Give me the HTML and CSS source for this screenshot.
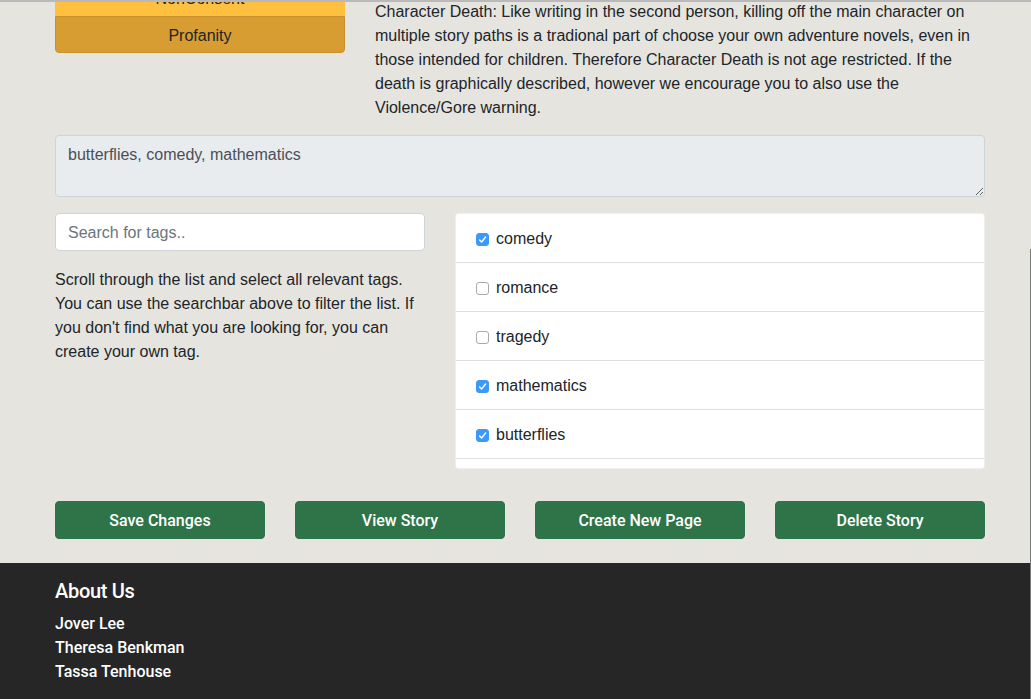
FILE: index.html
```html
<!DOCTYPE html>
<html lang="en">
<head>
<meta charset="utf-8">
<title>Edit Story</title>
<link rel="stylesheet" href="styles.css">
</head>
<body>
<div class="frame-top"></div>
<div class="scroll-edge"></div>
<main class="page">
  <section class="warn-row">
    <div class="warn-tags">
      <div class="warn-tag tag-nonconsent">NonConsent</div>
      <div class="warn-tag tag-profanity">Profanity</div>
    </div>
    <p class="warn-desc">Character Death: Like writing in the second person, killing off the main character on multiple story paths is a tradional part of choose your own adventure novels, even in those intended for children. Therefore Character Death is not age restricted. If the death is graphically described, however we encourage you to also use the Violence/Gore warning.</p>
  </section>

  <textarea class="tag-field" readonly>butterflies, comedy, mathematics</textarea>

  <section class="tag-row">
    <div class="tag-help">
      <input class="tag-search" type="text" placeholder="Search for tags..">
      <p class="help-text">Scroll through the list and select all relevant tags. You can use the searchbar above to filter the list. If you don't find what you are looking for, you can create your own tag.</p>
    </div>
    <ul class="tag-list">
      <li class="tag-item"><span class="check on"><svg viewBox="0 0 13 13" width="13" height="13"><path d="M3.6 6.9 L5.6 9 L9.6 4" fill="none" stroke="#fff" stroke-width="1.4" stroke-linecap="round" stroke-linejoin="round"/></svg></span>comedy</li>
      <li class="tag-item"><span class="check"></span>romance</li>
      <li class="tag-item"><span class="check"></span>tragedy</li>
      <li class="tag-item"><span class="check on"><svg viewBox="0 0 13 13" width="13" height="13"><path d="M3.6 6.9 L5.6 9 L9.6 4" fill="none" stroke="#fff" stroke-width="1.4" stroke-linecap="round" stroke-linejoin="round"/></svg></span>mathematics</li>
      <li class="tag-item"><span class="check on"><svg viewBox="0 0 13 13" width="13" height="13"><path d="M3.6 6.9 L5.6 9 L9.6 4" fill="none" stroke="#fff" stroke-width="1.4" stroke-linecap="round" stroke-linejoin="round"/></svg></span>butterflies</li>
      <li class="tag-item"><span class="check"></span>horror</li>
    </ul>
  </section>

  <section class="actions">
    <button class="btn">Save Changes</button>
    <button class="btn">View Story</button>
    <button class="btn">Create New Page</button>
    <button class="btn">Delete Story</button>
  </section>
</main>
<footer class="footer">
  <h5 class="footer-title">About Us</h5>
  <div class="footer-name">Jover Lee</div>
  <div class="footer-name">Theresa Benkman</div>
  <div class="footer-name">Tassa Tenhouse</div>
</footer>
</body>
</html>
```

FILE: styles.css
```css
* { box-sizing: border-box; }
html, body { margin: 0; padding: 0; }
body {
  background: #e5e4df;
  font-family: "Liberation Sans", Arial, sans-serif;
  font-size: 16px;
  line-height: 24px;
  color: #212529;
  overflow: hidden;
}
.frame-top {
  position: fixed; top: 0; left: 0; right: 0; height: 2px;
  background: #b9b9b9; z-index: 5;
}
.scroll-edge {
  position: fixed; top: 249px; bottom: 0; right: 0; width: 1px;
  background: #7a7a7a; z-index: 5;
}
.page {
  width: 930px;
  margin: -21px 0 0 55px;
}
.warn-row {
  display: flex;
  gap: 30px;
}
.warn-tags {
  width: 290px;
  flex: none;
  display: flex;
  flex-direction: column;
}
.warn-tag {
  height: 37px;
  line-height: 37px;
  text-align: center;
  color: #212529;
  border: 1px solid transparent;
}
.tag-nonconsent {
  background: #ffc03f;
  border-color: #ffc03f;
}
.tag-profanity {
  background: #d79d33;
  border-color: #c8912c;
  border-radius: 0 0 4px 4px;
}
.warn-desc {
  margin: 21px 0 0;
  width: 606px;
  flex: none;
}
.tag-field {
  display: block;
  width: 930px;
  height: 62px;
  margin: 15px 0 16px;
  padding: 7px 12px 5px;
  background: #e9ecef;
  border: 1px solid #ced4da;
  border-radius: 4px;
  font-family: inherit;
  font-size: 16px;
  line-height: 24px;
  color: #495057;
  resize: vertical;
}
.tag-row {
  display: flex;
  gap: 30px;
  align-items: flex-start;
}
.tag-help {
  width: 370px;
  flex: none;
}
.tag-search {
  display: block;
  width: 100%;
  height: 38px;
  padding: 7px 12px 5px;
  border: 1px solid #ced4da;
  border-radius: 4px;
  background: #fff;
  font-family: inherit;
  font-size: 16px;
  color: #495057;
}
.tag-search::placeholder { color: #6c757d; }
.help-text {
  margin: 17px 0 0;
}
.tag-list {
  flex: 1;
  list-style: none;
  margin: 0;
  padding: 0;
  height: 256px;
  overflow: hidden;
  background: #fff;
  border: 1px solid rgba(0, 0, 0, 0.06);
  border-radius: 4px;
}
.tag-item {
  display: flex;
  align-items: center;
  height: 49px;
  padding: 2px 19px 0;
  border-bottom: 1px solid #dfdfdf;
}
.tag-item:last-child { border-bottom: none; }
.check {
  width: 13px;
  height: 13px;
  margin: 1px 7px 0 1px;
  border: 1px solid #a9a9a9;
  border-radius: 3px;
  background: #fff;
  flex: none;
  display: flex;
}
.check.on {
  background: #3b99fc;
  border-color: #3b99fc;
}
.check.on svg { margin: -1px; }
.actions {
  display: flex;
  gap: 30px;
  margin: 32px 0 24px;
}
.btn {
  flex: 1;
  height: 38px;
  border: 1px solid #2f7349;
  border-radius: 4px;
  background: #2f7349;
  color: #fff;
  font-family: Roboto, "Liberation Sans", sans-serif;
  font-weight: 500;
  font-size: 16px;
  padding: 0;
}
.footer {
  background: #262626;
  color: #fff;
  padding: 16px 55px 40px;
  min-height: 200px;
}
.footer-title {
  margin: 0 0 9px;
  font-family: Roboto, "Liberation Sans", sans-serif;
  font-size: 20px;
  font-weight: 500;
  line-height: 24px;
  letter-spacing: -0.3px;
}
.footer-name {
  font-family: Roboto, "Liberation Sans", sans-serif;
  font-weight: 500;
  line-height: 24px;
}
```
